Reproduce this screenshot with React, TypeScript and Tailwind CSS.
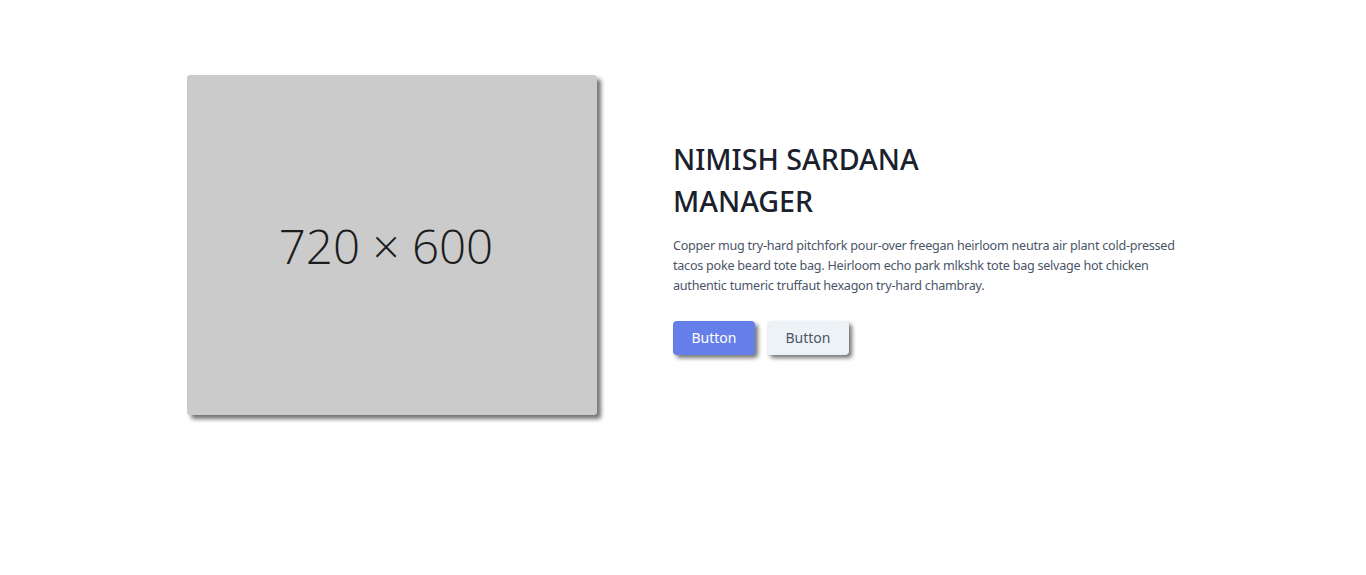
import React from "react";

export default function App() {
  return (
    <div className="w-[1366px] h-[575px] bg-white" style={{ fontFamily: '"Noto Sans", "Open Sans", sans-serif' }}>
      <section className="flex items-center pl-[187px] pt-[75px]">
        <div className="w-[410px] h-[340px] shrink-0 bg-[#cbcbcb] rounded-[3px] shadow-[4px_4px_4px_rgba(0,0,0,0.55)] flex items-center justify-center">
          <span className="text-[47.5px] font-light text-[#1c1c1c] pt-[2px] pr-[12px]" style={{ fontFamily: '"Open Sans", sans-serif' }}>
            720 × 600
          </span>
        </div>
        <div className="pl-[76px] mt-[2px] flex flex-col">
          <h1 className="text-[28.6px] leading-[42px] font-medium text-[#1a202c] mb-[14px]">
            NIMISH SARDANA
            <br />
            MANAGER
          </h1>
          <p className="text-[12.6px] tracking-[-0.25px] leading-[20px] text-[#4a5568] w-[540px] mb-[25px]">
            Copper mug try-hard pitchfork pour-over freegan heirloom neutra air plant cold-pressed
            <br />
            tacos poke beard tote bag. Heirloom echo park mlkshk tote bag selvage hot chicken
            <br />
            authentic tumeric truffaut hexagon try-hard chambray.
          </p>
          <div className="flex gap-[12px]">
            <button className="w-[82px] h-[34px] rounded-[4px] bg-[#667eea] text-white text-[14px] shadow-[3px_3px_4px_rgba(0,0,0,0.55)]">
              Button
            </button>
            <button className="w-[82px] h-[34px] rounded-[4px] bg-[#edf2f7] text-[#4a5568] text-[14px] shadow-[3px_3px_4px_rgba(0,0,0,0.55)]">
              Button
            </button>
          </div>
        </div>
      </section>
    </div>
  );
}
